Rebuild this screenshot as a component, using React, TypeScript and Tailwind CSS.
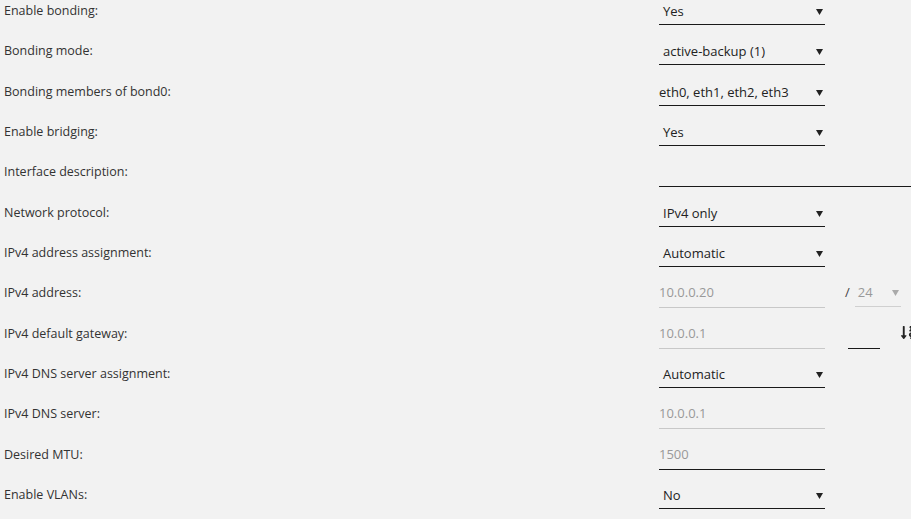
import { FaSortNumericDown } from 'react-icons/fa';

type Row =
    | { label: string; kind: 'select'; value: string; flush?: boolean }
    | { label: string; kind: 'text' }
    | { label: string; kind: 'input'; value: string; dark?: boolean; extra?: 'prefix' | 'gateway' };

const rows: Row[] = [
    { label: 'Enable bonding:', kind: 'select', value: 'Yes' },
    { label: 'Bonding mode:', kind: 'select', value: 'active-backup (1)' },
    { label: 'Bonding members of bond0:', kind: 'select', value: 'eth0, eth1, eth2, eth3', flush: true },
    { label: 'Enable bridging:', kind: 'select', value: 'Yes' },
    { label: 'Interface description:', kind: 'text' },
    { label: 'Network protocol:', kind: 'select', value: 'IPv4 only' },
    { label: 'IPv4 address assignment:', kind: 'select', value: 'Automatic' },
    { label: 'IPv4 address:', kind: 'input', value: '10.0.0.20', extra: 'prefix' },
    { label: 'IPv4 default gateway:', kind: 'input', value: '10.0.0.1', extra: 'gateway' },
    { label: 'IPv4 DNS server assignment:', kind: 'select', value: 'Automatic' },
    { label: 'IPv4 DNS server:', kind: 'input', value: '10.0.0.1' },
    { label: 'Desired MTU:', kind: 'input', value: '1500', dark: true },
    { label: 'Enable VLANs:', kind: 'select', value: 'No' },
];

function Arrow({ className }: { className: string }) {
    return (
        <svg width="7" height="7" viewBox="0 0 7 7" className={className}>
            <path d="M0 1h7L3.5 7z" fill="currentColor" />
        </svg>
    );
}

function Control({ row }: { row: Row }) {
    if (row.kind === 'select') {
        return (
            <div
                className={`mt-[3px] h-[22px] w-[166px] border-b border-[#1a1a1a] flex justify-between pr-[2px] text-[#222] text-[13px] leading-[17px] ${row.flush ? 'pl-0' : 'pl-[4px]'}`}
            >
                <span>{row.value}</span>
                <Arrow className="mt-[5px] text-[#222]" />
            </div>
        );
    }
    if (row.kind === 'text') {
        return <div className="mt-[3px] h-[23px] flex-1 border-b border-[#1a1a1a]" />;
    }
    return (
        <div className="flex items-start">
            <div
                className={`mt-[3px] h-[23px] w-[166px] border-b text-[#999] text-[13px] leading-[14px] ${row.dark ? 'border-[#1a1a1a]' : 'border-[#c8c8c8]'}`}
            >
                {row.value}
            </div>
            {row.extra === 'prefix' && (
                <div className="flex items-start ml-[20px]">
                    <span className="mt-[3px] text-[#444] text-[13px] leading-[14px]">/</span>
                    <div className="ml-[5px] mt-[3px] h-[22px] w-[46px] border-b border-[#d0d0d0] flex justify-between pl-[3px] pr-[2px] text-[#999] text-[13px] leading-[14px]">
                        <span>24</span>
                        <Arrow className="mt-[4px] text-[#aaa]" />
                    </div>
                </div>
            )}
            {row.extra === 'gateway' && (
                <div className="flex items-start ml-[23px]">
                    <div className="mt-[3px] h-[23px] w-[32px] border-b border-[#1a1a1a]" />
                    <FaSortNumericDown className="ml-[20px] mt-[2px] text-[#222]" size={15} />
                </div>
            )}
        </div>
    );
}

export default function App() {
    return (
        <div
            className="w-[911px] h-[519px] overflow-hidden bg-[#f2f2f2] text-[12.5px] text-[#333]"
            style={{ fontFamily: '"Open Sans", "Noto Sans", sans-serif' }}
        >
            {rows.map((row) => (
                <div key={row.label} className="flex items-start h-[40.35px]">
                    <div className="w-[659px] shrink-0 pl-[4px] pt-[2px] leading-[18px]">{row.label}</div>
                    <div className="flex-1 flex">
                        <Control row={row} />
                    </div>
                </div>
            ))}
        </div>
    );
}
